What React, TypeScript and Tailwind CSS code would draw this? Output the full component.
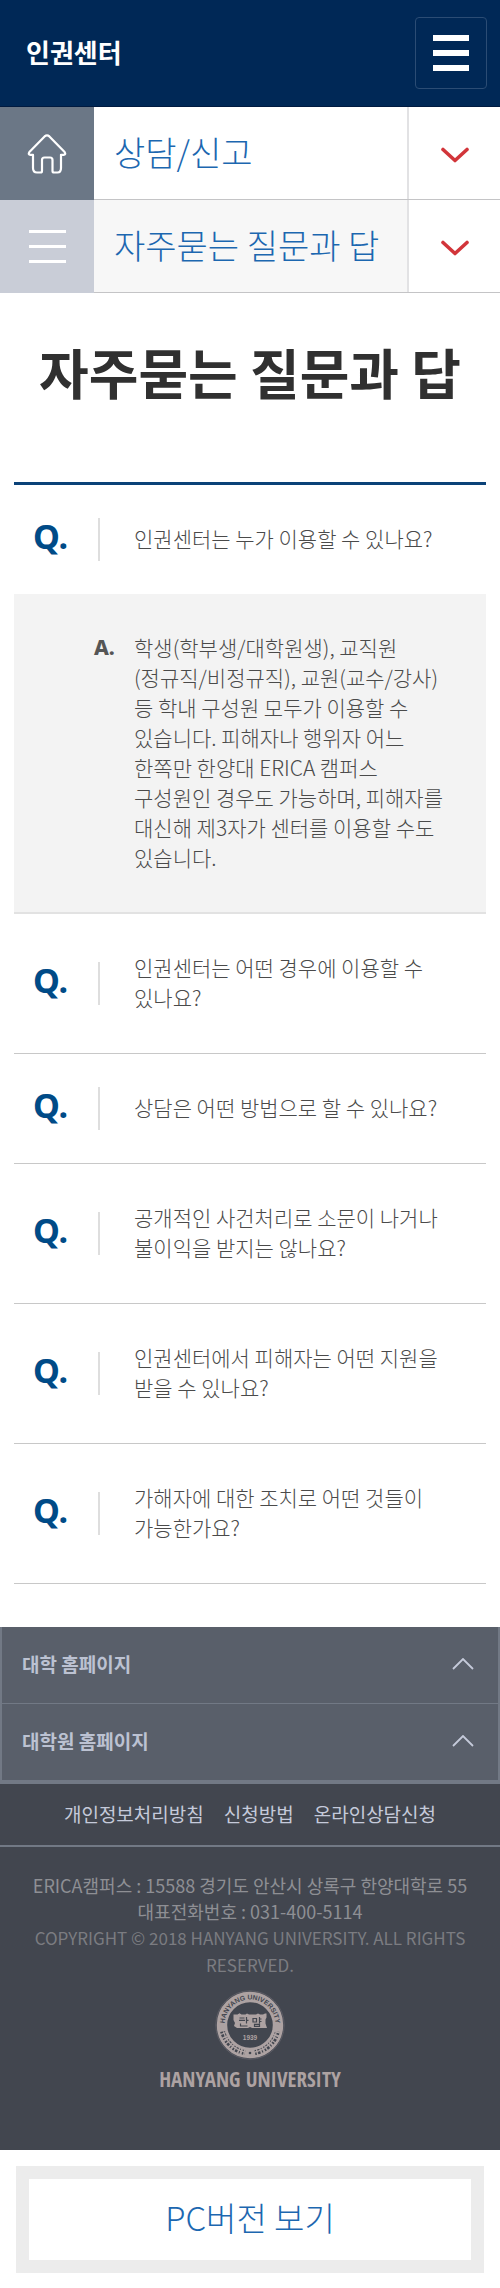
type Faq = { question: string; answer?: string };

const FAQS: Faq[] = [
  {
    question: '인권센터는 누가 이용할 수 있나요?',
    answer:
      '학생(학부생/대학원생), 교직원(정규직/비정규직), 교원(교수/강사) 등 학내 구성원 모두가 이용할 수 있습니다. 피해자나 행위자 어느 한쪽만 한양대 ERICA 캠퍼스 구성원인 경우도 가능하며, 피해자를 대신해 제3자가 센터를 이용할 수도 있습니다.',
  },
  { question: '인권센터는 어떤 경우에 이용할 수 있나요?' },
  { question: '상담은 어떤 방법으로 할 수 있나요?' },
  { question: '공개적인 사건처리로 소문이 나거나 불이익을 받지는 않나요?' },
  { question: '인권센터에서 피해자는 어떤 지원을 받을 수 있나요?' },
  { question: '가해자에 대한 조치로 어떤 것들이 가능한가요?' },
];

function HomeIcon() {
  return (
    <svg viewBox="0 0 40 40" className="size-10" fill="none" stroke="#fff" strokeWidth="2.200" strokeLinejoin="round" strokeLinecap="round" aria-hidden="true">
      <path d="M17.600 2.400Q20 .400 22.400 2.400L37.600 18Q39.200 20.600 36.500 20.800H34V34Q34 38.500 30.500 38.500H27Q25.500 38.500 25.500 37V26Q25.500 23.500 23 23.500H17.500Q15 23.500 15 26V37Q15 38.500 13.500 38.500H10Q6 38.500 6 34V20.800H3.500Q.800 20.600 2.400 18Z" />
    </svg>
  );
}

function ChevronDown() {
  return (
    <svg viewBox="0 0 28 16" className="h-4 w-7" fill="none" stroke="#d2353a" strokeWidth="3.600" strokeLinecap="round" strokeLinejoin="round" aria-hidden="true">
      <path d="M2 2.500L14 13.500L26 2.500" />
    </svg>
  );
}

function Seal() {
  return (
    <svg viewBox="0 0 70 70" className="size-[70px]" role="img" aria-label="HANYANG UNIVERSITY 1939">
      <circle cx="35" cy="35" r="34.200" fill="none" stroke="#5c5c65" strokeWidth="1" />
      <circle cx="35" cy="35" r="28" fill="none" stroke="#ada2a2" strokeWidth="10.400" />
      <path id="seal-top" d="M9.500 35A25.500 25.500 0 0 1 60.500 35" fill="none" />
      <text fontFamily="Liberation Sans" fontSize="6.800" fontWeight="700" fill="#42464f">
        <textPath href="#seal-top" startOffset="50%" textAnchor="middle">HANYANG UNIVERSITY</textPath>
      </text>
      <path d="M7.600 41.500A28.200 28.200 0 0 0 30 62.500M40 62.500A28.200 28.200 0 0 0 62.400 41.500" fill="none" stroke="#42464f" strokeWidth="5" strokeDasharray="1.500 1.300 2.500 1.500 1 2" />
      <path d="M8.500 41.300A27.800 27.800 0 0 0 30 62M40 62A27.800 27.800 0 0 0 61.500 41.300" fill="none" stroke="#ada2a2" strokeWidth="1.300" />
      <circle cx="35" cy="63" r="1.300" fill="#42464f" />
      <path d="M18.500 24.500h4l2-1.300 2 1.300h4l1.500-1 2 1h7l2-1 2 1h3l2-1h1.500v4l-1 2v4l1.500 4.500H37l-2-1-2 1H22l-3-2 1-3-1.500-3z" fill="#ada2a2" />
      <path d="M24.500 28h5M24 30.300h6M31.500 27v6.500M31.500 30.300h2M25.500 33.500v2.500h7M38 28.500h3.500v3.500H38zM44.500 27v6.500M44.500 29h2M44.500 31.500h2M39.500 34.300h5v2h-5z" fill="none" stroke="#42464f" strokeWidth="1.200" />
      <text x="35" y="49.500" textAnchor="middle" fontFamily="Liberation Sans" fontSize="6.500" fontWeight="700" fill="#ada2a2">1939</text>
    </svg>
  );
}

function NavRow({ label, current }: { label: string; current?: boolean }) {
  return (
    <div className="flex h-[93px]">
      {current ? (
        <span className="flex w-[94px] shrink-0 flex-col items-center justify-center gap-3 bg-[#c9cdd7]">
          <i className="h-[3px] w-[37px] bg-white" />
          <i className="h-[3px] w-[37px] bg-white" />
          <i className="h-[3px] w-[37px] bg-white" />
        </span>
      ) : (
        <a href="#home" aria-label="홈" className="flex w-[94px] shrink-0 items-center justify-center bg-[#6b7786]">
          <HomeIcon />
        </a>
      )}
      <button
        type="button"
        className={`flex min-w-0 flex-1 items-stretch border-b border-[#c4c4c6] text-left text-[34px] font-light text-[#1c67b0] ${current ? 'bg-[#f7f7f7]' : 'bg-white'}`}
      >
        <span className="flex flex-1 items-center whitespace-nowrap pb-1 pl-5">{label}</span>
        <span className="flex w-[93px] shrink-0 items-center justify-center border-l-2 border-[#e2e2e4] bg-white pt-1">
          <ChevronDown />
        </span>
      </button>
    </div>
  );
}

function FaqItem({ question, answer }: Faq) {
  return (
    <li>
      <button type="button" className={`flex w-full items-center py-[38px] pr-9 text-left ${answer ? '' : 'border-b border-[#c8c8c8]'}`}>
        <span className="-my-2 w-[84px] shrink-0 pb-2 pl-[19px] font-['Noto_Sans'] text-[34px] leading-[38px] font-bold text-[#004b87]">Q.</span>
        <span className="-my-2 h-[43px] w-9 shrink-0 border-l-2 border-[#dedede]" />
        <span className="min-w-0 flex-1 pb-[3px]">{question}</span>
      </button>
      {answer && (
        <div className="flex border-b-2 border-[#e2e2e2] bg-[#f3f3f3] pt-[38px] pr-9 pb-10">
          <strong className="w-[120px] shrink-0 pl-20 font-['Noto_Sans'] font-extrabold text-[#555]">A.</strong>
          <p className="min-w-0 flex-1">{answer}</p>
        </div>
      )}
    </li>
  );
}

function FamilySite({ label }: { label: string }) {
  return (
    <button type="button" className="flex h-[77px] w-full items-center justify-between border-x-2 border-b border-[#727985] bg-[#595f6a] pr-6 pb-[2px] pl-5 text-left text-[19px] font-bold text-[#bcc2d2]">
      {label}
      <svg viewBox="0 0 22 12" className="h-3 w-[22px]" fill="none" stroke="#c5cada" strokeWidth="1.800" aria-hidden="true">
        <path d="M1 11L11 1L21 11" />
      </svg>
    </button>
  );
}

export default function App() {
  return (
    <div className="bg-white font-['Noto_Sans_CJK_KR',sans-serif] text-[#4a4a4a] [word-break:keep-all]">
      <header className="flex h-[107px] items-center justify-between border-b border-[#001a40] bg-[#002856] pr-[13px] pl-[26px]">
        <a href="#top" className="pb-1 text-[26px] font-bold text-white">인권센터</a>
        <button type="button" aria-label="메뉴" className="flex size-[72px] flex-col items-center justify-center gap-[9px] rounded-sm border border-[#2b4c74]">
          <i className="h-[6px] w-9 bg-white" />
          <i className="h-[6px] w-9 bg-white" />
          <i className="h-[6px] w-9 bg-white" />
        </button>
      </header>
      <nav>
        <NavRow label="상담/신고" />
        <NavRow label="자주묻는 질문과 답" current />
      </nav>
      <main className="px-[14px] pb-[43px]">
        <h1 className="pt-[39px] pb-[70px] text-center text-[54px] leading-[80px] font-bold text-[#303030]">자주묻는 질문과 답</h1>
        <ul className="border-t-[3px] border-[#0b4278] text-[21px] leading-[30px] font-light">
          {FAQS.map((faq) => (
            <FaqItem key={faq.question} {...faq} />
          ))}
        </ul>
      </main>
      <footer className="bg-[#42464f]">
        <FamilySite label="대학 홈페이지" />
        <FamilySite label="대학원 홈페이지" />
        <div className="flex h-[66px] items-center justify-center gap-5 border-t-[3px] border-b-2 border-[#727985] text-[19px] text-[#c5cada]">
          <a href="#privacy">개인정보처리방침</a>
          <a href="#apply">신청방법</a>
          <a href="#online">온라인상담신청</a>
        </div>
        <div className="flex flex-col items-center px-6 pt-[25px] pb-[58px] text-center text-[#8e8f94]">
          <address className="text-[18px] leading-[26px] not-italic">
            ERICA캠퍼스 : 15588 경기도 안산시 상록구 한양대학로 55
            <br />
            대표전화번호 : 031-400-5114
          </address>
          <p className="text-[17px] leading-[27px] text-[#7b7c81]">COPYRIGHT © 2018 HANYANG UNIVERSITY. ALL RIGHTS RESERVED.</p>
          <div className="mt-3">
            <Seal />
          </div>
          <strong className="mt-[6px] font-['Open_Sans_Condensed','Noto_Sans_Condensed','Roboto_Condensed','Noto_Sans_CJK_KR',sans-serif] text-[21px] leading-[26px] font-bold text-[#ada2a2]">HANYANG UNIVERSITY</strong>
        </div>
      </footer>
      <div className="p-4">
        <a href="#pc" className="flex h-[107px] items-center justify-center border-[13px] border-[#ececec] pb-1 text-[33px] font-light text-[#1c67b0]">PC버전 보기</a>
      </div>
    </div>
  );
}
